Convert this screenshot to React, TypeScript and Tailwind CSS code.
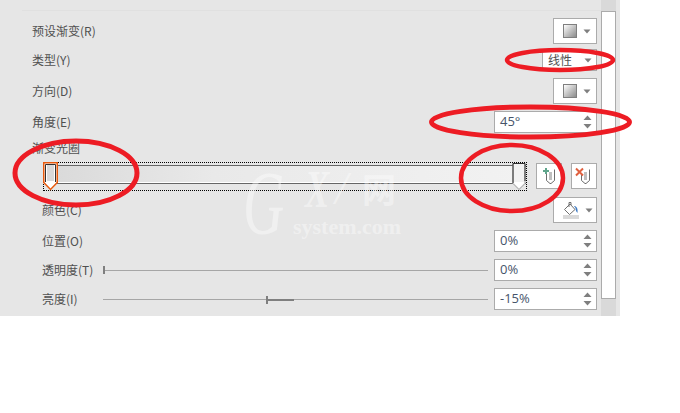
const labelFont = { fontFamily: '"Noto Sans CJK SC", "Liberation Sans", sans-serif' };

function ArrowDown() {
  return (
    <svg width="8" height="5" viewBox="0 0 8 5" className="shrink-0">
      <path d="M0.5 0.5H7.5L4 4.5Z" fill="#7f7f7f" />
    </svg>
  );
}

function Spinner() {
  return (
    <svg width="9" height="14" viewBox="0 0 9 14" className="shrink-0">
      <path d="M4.5 0.5L8.5 5H0.5Z" fill="#7f7f7f" />
      <path d="M0.5 9H8.5L4.5 13.5Z" fill="#7f7f7f" />
    </svg>
  );
}

function GradientButton() {
  return (
    <button className="w-[44px] h-[26px] bg-white border border-[#ababab] flex items-center justify-center gap-[6px] pl-[3px]">
      <span className="w-[14px] h-[14px] border border-[#7f7f7f] bg-gradient-to-br from-white to-[#8c8c8c]" />
      <ArrowDown />
    </button>
  );
}

function SpinBox({ value }: { value: string }) {
  return (
    <div className="w-[103px] h-[22px] bg-white border border-[#ababab] flex items-center justify-between pl-[5px] pr-[4px] shrink-0">
      <span className="text-[13px] text-[#46546a]" style={{ fontFamily: '"Open Sans", sans-serif' }}>{value}</span>
      <Spinner />
    </div>
  );
}

function Slider({ thumb }: { thumb?: boolean }) {
  return (
    <div className="relative w-[385px] h-px bg-[#a6a6a6]">
      {thumb ? (
        <>
          <div className="absolute left-[163px] top-[-3px] w-[2px] h-[8px] bg-[#7f7f7f]" />
          <div className="absolute left-[165px] top-0 w-[26px] h-[2px] bg-[#7f7f7f]" />
        </>
      ) : (
        <div className="absolute left-0 top-[-4px] w-[2px] h-[8px] bg-[#7f7f7f]" />
      )}
    </div>
  );
}

function AddStopIcon() {
  return (
    <svg width="24" height="24" viewBox="1 1 24 24" className="shrink-0">
      <rect x="13" y="9" width="3" height="8" fill="#bfbfbf" />
      <path d="M18.5 6.5V17.5L15 20.5H14L10.5 17.5V11" fill="none" stroke="#6e6e6e" />
      <path d="M10 5V11M7 8H13" stroke="#5fa58b" strokeWidth="2" />
    </svg>
  );
}

function RemoveStopIcon() {
  return (
    <svg width="24" height="24" viewBox="1 1 24 24" className="shrink-0">
      <rect x="13" y="9" width="3" height="8" fill="#bfbfbf" />
      <path d="M18.5 6.5V17.5L15 20.5H14L10.5 17.5V12" fill="none" stroke="#6e6e6e" />
      <path d="M5 5.5L12 12.5M12 5.5L5 12.5" stroke="#e0603f" strokeWidth="2" />
    </svg>
  );
}

function BucketIcon() {
  return (
    <svg width="26" height="24" viewBox="0 0 26 24" className="shrink-0">
      <path d="M16 6L21 11.5L15.5 16.5L10.5 11.5Z" fill="#fff" stroke="#6e6e6e" />
      <path d="M15 9V4.5H17V7" fill="none" stroke="#6e6e6e" />
      <path d="M20 8C22.5 8 24 10 23.5 15L22 13L21.5 10Z" fill="#3f7cc4" />
      <rect x="9" y="17" width="16" height="4" fill="#d9d9d9" />
    </svg>
  );
}

export default function App() {
  return (
    <div className="relative w-[680px] h-[413px] bg-white overflow-hidden" style={labelFont}>
      <div className="w-[620px] h-[316px] bg-[#e6e6e6] flex text-[12px] text-[#505050]">
        {/* Form */}
        <div className="w-[601px] shrink-0 flex flex-col">
          <div className="mt-[10px] ml-[22px] h-px bg-[#e0e0e0]" />

          <div className="mt-[7px] h-[26px] pl-[32px] pr-[4px] flex items-center justify-between">
            <span>预设渐变(R)</span>
            <GradientButton />
          </div>

          <div className="mt-[5px] h-[22px] pl-[32px] pr-[4px] flex items-center justify-between">
            <span>类型(Y)</span>
            <div className="w-[55px] h-[22px] bg-white border border-[#ababab] flex items-center justify-between pl-[5px] pr-[4px]">
              <span>线性</span>
              <ArrowDown />
            </div>
          </div>

          <div className="mt-[7px] h-[26px] pl-[32px] pr-[4px] flex items-center justify-between">
            <span>方向(D)</span>
            <GradientButton />
          </div>

          <div className="mt-[7px] h-[22px] pl-[32px] pr-[4px] flex items-center justify-between">
            <span>角度(E)</span>
            <SpinBox value="45°" />
          </div>

          <div className="mt-[5px] h-[20px] pl-[32px] flex items-center">
            <span>渐变光圈</span>
          </div>

          {/* Gradient stops */}
          <div className="mt-[4px] h-[29px] pl-[43px] pr-[4px] flex items-start">
            <div className="relative w-[484px] h-[29px] border border-dotted border-black pt-[2px]">
              <div className="h-[19px] border-t border-b border-[#666] bg-gradient-to-r from-[#d9d9d9] via-[#e9e9e9] via-35% to-[#f2f2f2] shadow-[inset_0_-1px_0_#fff]" />
              <svg width="15" height="29" viewBox="0 0 15 29" className="absolute left-[-1px] top-[-1px]">
                <path d="M0.75 0.75H14.25V20.5L7.5 27.5L0.75 20.5Z" fill="#fff" stroke="#e8590c" strokeWidth="1.5" />
                <rect x="4" y="3" width="7" height="16" fill="#d9d9d9" />
                <path d="M2.5 20V2.5H12.5V20" fill="none" stroke="#333" />
              </svg>
              <svg width="14" height="28" viewBox="0 0 14 28" className="absolute left-[468px] top-0">
                <path d="M1 0.5H13V20.5L7 26.5L1 20.5Z" fill="#f2f2f2" stroke="#9a9a9a" />
                <path d="M1 20V0.5H13V18" fill="none" stroke="#333" />
                <path d="M2 19H12V20L7 25L2 20Z" fill="#fff" />
              </svg>
            </div>
            <button className="ml-[9px] mt-px w-[26px] h-[26px] bg-white border border-[#ababab] flex items-center justify-center">
              <AddStopIcon />
            </button>
            <button className="ml-[9px] mt-px w-[26px] h-[26px] bg-white border border-[#ababab] flex items-center justify-center">
              <RemoveStopIcon />
            </button>
          </div>

          <div className="mt-[6px] h-[26px] pl-[42px] pr-[4px] flex items-center justify-between">
            <span>颜色(C)</span>
            <button className="w-[44px] h-[26px] bg-white border border-[#ababab] flex items-center gap-[5px]">
              <BucketIcon />
              <ArrowDown />
            </button>
          </div>

          <div className="mt-[7px] h-[22px] pl-[42px] pr-[4px] flex items-center justify-between">
            <span>位置(O)</span>
            <SpinBox value="0%" />
          </div>

          <div className="mt-[7px] h-[22px] pl-[42px] pr-[4px] flex items-center">
            <span className="w-[61px] shrink-0">透明度(T)</span>
            <Slider />
            <div className="ml-[6px]">
              <SpinBox value="0%" />
            </div>
          </div>

          <div className="mt-[7px] h-[22px] pl-[42px] pr-[4px] flex items-center">
            <span className="w-[61px] shrink-0">亮度(I)</span>
            <Slider thumb />
            <div className="ml-[6px]">
              <SpinBox value="-15%" />
            </div>
          </div>
        </div>

        {/* Scrollbar */}
        <div className="w-[15px] shrink-0 bg-[#d9d9d9] pt-[11px] pb-[17px] flex">
          <div className="w-full bg-white border border-[#ababab]" />
        </div>
      </div>

      {/* Site watermark */}
      <div className="absolute left-[243px] top-[160px] text-white/40 pointer-events-none" style={{ fontFamily: '"Liberation Serif", serif' }}>
        <span className="absolute left-0 top-[-3px] text-[92px] leading-none italic scale-x-[0.62] origin-left">G</span>
        <span className="absolute left-[62px] top-[4px] text-[52px] leading-none italic font-bold scale-x-[0.7] origin-left">X</span>
        <span className="absolute left-[92px] top-[6px] text-[46px] leading-none italic">/</span>
        <span className="absolute left-[119px] top-[12px] text-[34px] leading-none font-bold" style={labelFont}>网</span>
        <span className="absolute left-[50px] top-[56px] text-[22px] leading-none font-bold whitespace-nowrap">system.com</span>
      </div>

      {/* Red hand-drawn annotations */}
      <svg width="680" height="413" viewBox="0 0 680 413" className="absolute left-0 top-0 pointer-events-none">
        <g fill="none" stroke="#ed1c24">
          <ellipse cx="560" cy="60" rx="53" ry="10" strokeWidth="4.5" />
          <ellipse cx="530.5" cy="122" rx="99" ry="15" strokeWidth="5" />
          <ellipse cx="76" cy="173" rx="61" ry="32" strokeWidth="5" />
          <ellipse cx="512" cy="178" rx="51" ry="33" strokeWidth="4.5" />
        </g>
      </svg>
    </div>
  );
}
